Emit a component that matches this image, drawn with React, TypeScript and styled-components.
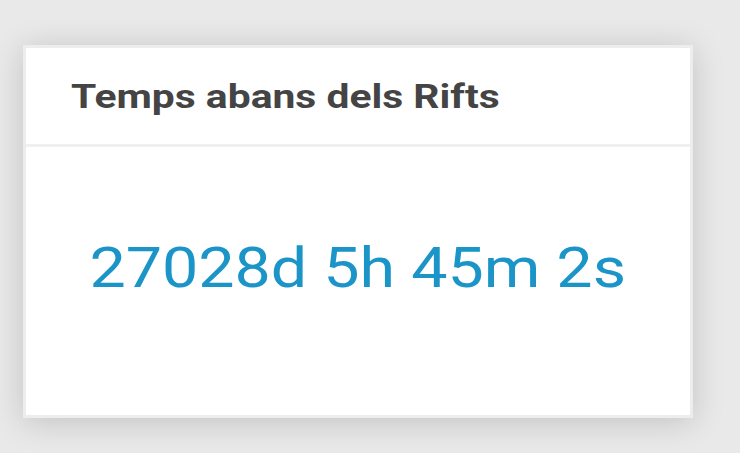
import React from "react";
import styled, { createGlobalStyle } from "styled-components";

const Global = createGlobalStyle`
  html, body { margin: 0; padding: 0; }
  body {
    background: #e9e9e9;
    font-family: Roboto, "Liberation Sans", sans-serif;
    width: 740px;
    height: 453px;
    overflow: hidden;
  }
`;

const Page = styled.div`
  padding: 45px 47px 0 23px;
`;

const Card = styled.section`
  width: 670px;
  height: 373px;
  box-sizing: border-box;
  background: #fff;
  border: 3px solid #ededed;
  box-shadow: 0 4px 30px rgba(0, 0, 0, 0.17);
  display: flex;
  flex-direction: column;
`;

const Header = styled.header`
  height: 99px;
  box-sizing: border-box;
  border-bottom: 3px solid #f0f0f0;
  display: flex;
  align-items: center;
  padding-left: 45px;
`;

const Title = styled.h2`
  margin: 0;
  font-size: 34px;
  font-weight: 700;
  color: #444;
  transform: scaleX(1.2);
  transform-origin: left center;
`;

const Body = styled.div`
  flex: 1;
  display: flex;
  justify-content: center;
  padding-top: 93px;
`;

const Countdown = styled.div`
  font-size: 56px;
  font-weight: 400;
  color: #1b94c8;
  line-height: 1;
  transform: scaleX(1.153);
  transform-origin: center;
`;

export default function App() {
  return (
    <>
      <Global />
      <Page>
        <Card>
          <Header>
            <Title>Temps abans dels Rifts</Title>
          </Header>
          <Body>
            <Countdown>27028d 5h 45m 2s</Countdown>
          </Body>
        </Card>
      </Page>
    </>
  );
}
